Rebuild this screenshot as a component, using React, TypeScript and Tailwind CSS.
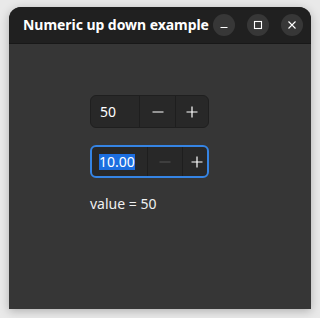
import React from 'react';

const font = { fontFamily: '"Noto Sans", "Open Sans", sans-serif' };

const TitleButton = ({ children }: { children: React.ReactNode }) => (
  <div className="w-[22px] h-[22px] rounded-full bg-[#373737] flex items-center justify-center text-white">
    {children}
  </div>
);

const Minus = ({ color = '#ffffff' }: { color?: string }) => (
  <svg width="12" height="12" viewBox="0 0 12 12">
    <path d="M0.5 6H11.5" stroke={color} strokeWidth="1.2" />
  </svg>
);

const Plus = () => (
  <svg width="12" height="12" viewBox="0 0 12 12">
    <path d="M0.5 6H11.5M6 0.5V11.5" stroke="#ffffff" strokeWidth="1.2" />
  </svg>
);

export default function App() {
  return (
    <div className="w-[320px] h-[318px] bg-[#e9e9e9] pt-[7px] px-[9px]" style={font}>
      <div className="w-[302px] h-[302px] rounded-t-[12px] overflow-hidden flex flex-col bg-[#363636] shadow-[0_2px_10px_rgba(0,0,0,0.25)]">
        {/* title bar */}
        <div className="h-[37px] bg-[#202020] border-b border-[#181818] flex items-center pl-[14px] pr-[8px]">
          <span className="flex-1 whitespace-nowrap text-white font-bold text-[14px] tracking-[-0.05px] leading-none">
            Numeric up down example
          </span>
          <div className="flex gap-[12px]">
            <TitleButton>
              <svg width="10" height="10" viewBox="0 0 10 10">
                <path d="M1.5 7.5H8.5" stroke="#fff" strokeWidth="1.1" />
              </svg>
            </TitleButton>
            <TitleButton>
              <svg width="10" height="10" viewBox="0 0 10 10">
                <rect x="1.5" y="1.5" width="7" height="7" fill="none" stroke="#fff" strokeWidth="1.1" />
              </svg>
            </TitleButton>
            <TitleButton>
              <svg width="10" height="10" viewBox="0 0 10 10">
                <path d="M1.5 1.5L8.5 8.5M8.5 1.5L1.5 8.5" stroke="#fff" strokeWidth="1.1" />
              </svg>
            </TitleButton>
          </div>
        </div>

        {/* content */}
        <div className="flex-1 pl-[81px] pt-[51px] text-white">
          <div className="w-[119px] h-[33px] rounded-[6px] bg-[#282828] border border-[#1f1f1f] flex">
            <div className="w-[48px] flex items-center pl-[9px] text-[14px]">50</div>
            <div className="w-[36px] border-l border-[#1e1e1e] flex items-center justify-center">
              <Minus />
            </div>
            <div className="flex-1 border-l border-[#1e1e1e] flex items-center justify-center">
              <Plus />
            </div>
          </div>

          <div className="mt-[17px] w-[119px] h-[33px] rounded-[6px] bg-[#282828] border-2 border-[#3584e4] flex">
            <div className="w-[55px] flex items-center pl-[7px] text-[14px]">
              <span className="bg-[#1c6ee0] leading-[16px]">10.00</span>
            </div>
            <div className="w-[35px] border-l border-[#1e1e1e] flex items-center justify-center">
              <Minus color="#555555" />
            </div>
            <div className="flex-1 border-l border-[#1e1e1e] flex items-center justify-center pl-[3px]">
              <Plus />
            </div>
          </div>

          <div className="mt-[15px] text-[14px] text-[#f0f0f0]">value = 50</div>
        </div>
      </div>
    </div>
  );
}
